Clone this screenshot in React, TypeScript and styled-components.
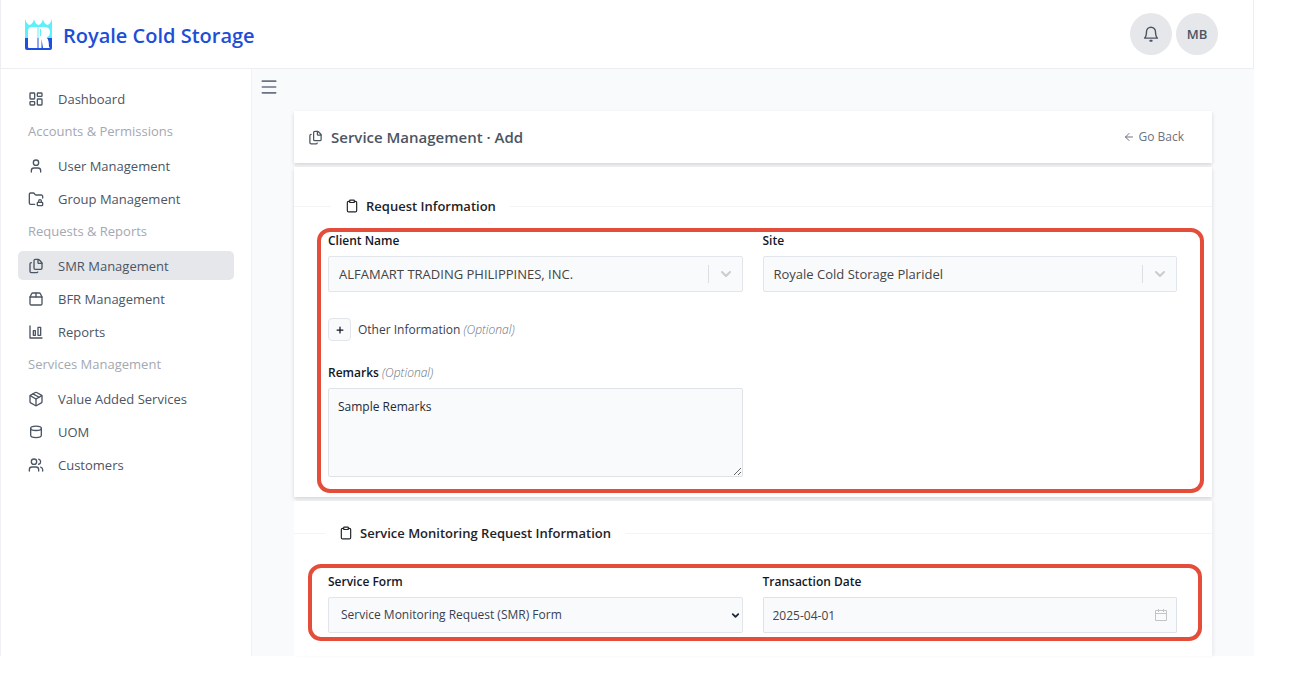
import React from "react";
import styled, { createGlobalStyle } from "styled-components";
import {
  ArrowLeft,
  ChevronDown,
  Clipboard,
  Files,
  FolderLock,
  LayoutDashboard,
  Menu,
  Package,
  Package2,
  Plus,
  User,
  Users,
} from "lucide-react";

const GlobalStyle = createGlobalStyle`
  *, *::before, *::after { box-sizing: border-box; }
  body {
    margin: 0;
    background: #fff;
    color: #374151;
    font-family: "Open Sans", "Noto Sans", sans-serif;
    font-size: 13px;
    line-height: 20px;
  }
  button, input, select, textarea { font: inherit; color: inherit; margin: 0; }
`;

const Page = styled.div`
  min-height: 100vh;
  padding: 0 39px 21px 0;
  display: flex;
  flex-direction: column;
`;

const Header = styled.header`
  display: flex;
  align-items: center;
  justify-content: space-between;
  height: 69px;
  padding: 0 35px 0 24px;
  border: solid #eceef1;
  border-width: 0 1px 1px 1px;
`;

const Brand = styled.a`
  display: flex;
  align-items: center;
  gap: 11px;
  color: #1d4ed8;
  font-size: 20px;
  font-weight: 600;
  line-height: 28px;
  text-decoration: none;
`;

const BrandName = styled.span`
  padding-top: 4px;
`;

const HeaderActions = styled.div`
  display: flex;
  gap: 4px;
`;

const RoundButton = styled.button`
  display: flex;
  align-items: center;
  justify-content: center;
  width: 42px;
  height: 42px;
  padding: 0;
  border: 0;
  border-radius: 50%;
  background: #e5e7eb;
  color: #4b5563;
  font-size: 13px;
  font-weight: 600;
`;

const Body = styled.div`
  flex: 1;
  display: flex;
`;

const Sidebar = styled.nav`
  flex: none;
  width: 252px;
  padding: 15px 17px;
  border: solid #f0f1f4;
  border-width: 0 1px;
`;

const NavGroup = styled.ul`
  display: flex;
  flex-direction: column;
  gap: 4px;
  margin: 0;
  padding: 0;
  list-style: none;
`;

const NavTitle = styled.h2`
  margin: 8px 0 10px 10px;
  color: #a3a8b2;
  font-size: 13px;
  font-weight: 400;
  line-height: 20px;
`;

const NavLink = styled.a<{ $active?: boolean }>`
  display: flex;
  align-items: center;
  gap: 14px;
  height: 29px;
  padding: 0 10px;
  border-radius: 5px;
  background: ${(p) => (p.$active ? "#e5e7eb" : "transparent")};
  color: #4b5563;
  font-size: 13px;
  text-decoration: none;
`;

const Main = styled.main`
  flex: 1;
  min-width: 0;
  display: flex;
  flex-direction: column;
  background: #f9fafb;
`;

const MenuButton = styled.button`
  align-self: flex-start;
  display: flex;
  margin: 8px 0 14px 7px;
  padding: 0;
  border: 0;
  background: none;
  color: #6b7280;
`;

const Cards = styled.div`
  flex: 1;
  display: flex;
  flex-direction: column;
  gap: 4px;
  padding: 0 42px;
`;

const Card = styled.section<{ $last?: boolean }>`
  position: relative;
  flex: ${(p) => (p.$last ? "1" : "none")};
  background: #fff;
  box-shadow: ${(p) =>
    p.$last ? "2px 0 3px rgba(0, 0, 0, 0.05)" : "0 2px 4px rgba(0, 0, 0, 0.15)"};
`;

const TitleCard = styled(Card)`
  display: flex;
  align-items: center;
  justify-content: space-between;
  height: 52px;
  padding: 0 28px 0 14px;
`;

const PageTitle = styled.h1`
  display: flex;
  align-items: center;
  gap: 8px;
  margin: 0;
  color: #4b5563;
  font-size: 15px;
  font-weight: 600;
  line-height: 24px;
`;

const BackLink = styled.a`
  display: flex;
  align-items: center;
  gap: 3px;
  color: #6b7280;
  font-size: 12px;
  text-decoration: none;
`;

const Divider = styled.h2<{ $lead: number }>`
  display: flex;
  align-items: center;
  gap: 14px;
  margin: 0;
  color: #1f2328;
  font-size: 13px;
  font-weight: 600;
  line-height: 22px;

  &::before,
  &::after {
    content: "";
    height: 1px;
    background: #f4f4f5;
  }
  &::before { width: ${(p) => p.$lead}px; }
  &::after { flex: 1; }
`;

const DividerText = styled.span`
  display: flex;
  align-items: center;
  gap: 7px;
`;

const RequestCard = styled(Card)`
  padding: 28px 0 20px;
`;

const MonitoringCard = styled(Card)`
  padding: 21px 0 16px;
`;

const FormGrid = styled.div<{ $top: number }>`
  display: grid;
  grid-template-columns: 1fr 1fr;
  column-gap: 20px;
  padding: ${(p) => p.$top}px 35px 0 34px;
`;

const Field = styled.div`
  display: flex;
  flex-direction: column;
  gap: 5px;
`;

const Label = styled.label`
  color: #111827;
  font-size: 12px;
  font-weight: 600;
  line-height: 20px;
`;

const Optional = styled.em`
  color: #6b7280;
  font-weight: 300;
`;

const ControlWrap = styled.div`
  position: relative;
  display: flex;
`;

const Select = styled.select<{ $plain?: boolean }>`
  appearance: none;
  width: 100%;
  height: 36px;
  padding: 0 48px 0 ${(p) => (p.$plain ? 12 : 10)}px;
  border: 1px solid #e2e6ea;
  border-radius: 2px;
  background: #f9fafb;
  color: ${(p) => (p.$plain ? "#374151" : "#444")};
  font-size: ${(p) => (p.$plain ? 12 : 13)}px;
`;

const Indicator = styled.span`
  position: absolute;
  top: 9px;
  right: 0;
  display: flex;
  align-items: center;
  justify-content: center;
  width: 35px;
  height: 18px;
  border-left: 1px solid #dcdfe3;
  color: #cccccc;
  pointer-events: none;
`;

const PlainArrow = styled.span`
  position: absolute;
  top: 13px;
  right: 2px;
  display: flex;
  color: #1f2937;
  pointer-events: none;
`;

const CalendarMark = styled.span`
  position: absolute;
  top: 12px;
  right: 10px;
  display: flex;
  color: #c4c4c4;
  pointer-events: none;
`;

const DateInput = styled.input`
  width: 100%;
  height: 36px;
  padding: 0 32px 0 9px;
  border: 1px solid #dfe2e7;
  border-radius: 1px;
  background: #f9fafb;
  color: #444;
  font-size: 12px;
`;

const OtherInfo = styled.div`
  grid-column: 1 / -1;
  display: flex;
  align-items: center;
  gap: 7px;
  margin: 26px 0 22px;
  color: #374151;
  font-size: 12px;
`;

const PlusButton = styled.button`
  display: flex;
  align-items: center;
  justify-content: center;
  width: 23px;
  height: 23px;
  padding: 0;
  border: 1px solid #e2e5e9;
  border-radius: 4px;
  background: #f9fafb;
  color: #111827;
`;

const TextArea = styled.textarea`
  width: 100%;
  height: 89px;
  padding: 8px 9px;
  border: 1px solid #dfe2e7;
  border-radius: 2px;
  background: #f9fafb;
  color: #1f2937;
  font-size: 12px;
  line-height: 20px;
`;

const Highlight = styled.div<{ $inset: string }>`
  position: absolute;
  inset: ${(p) => p.$inset};
  border: 4px solid #e44d3a;
  border-radius: 13px;
  pointer-events: none;
`;

const MonitoringHighlight = styled(Highlight)`
  height: 77px;
`;

const Logo = () => (
  <svg width="27" height="31" viewBox="0 0 27 31" aria-hidden="true">
    <path
      d="M0 0Q1.500 5 4.500 6Q8 5 9 0Q10 5 13.500 6Q17 5 18 0Q19 5 22.500 6Q25.500 5 27 0V19H0Z"
      fill="#5cf0fb"
    />
    <path d="M0 19H27V29Q27 31 25 31H2Q0 31 0 29Z" fill="#1d4fe0" />
    <path d="M3 12Q3 8 7 8H12.500V29H4Q3 29 3 28Z" fill="#fff" />
    <path
      d="M13.500 8H19Q25 8 25 13Q25 17 21.500 18.500Q24 20 24 28L25 29H18L16.500 20V29H13.500Z"
      fill="#fff"
    />
    <path d="M15 10H16V17H15Z" fill="#5cf0fb" />
  </svg>
);

const BellIcon = () => (
  <svg
    width="18"
    height="18"
    viewBox="0 0 24 24"
    fill="none"
    stroke="currentColor"
    strokeWidth="1.900"
    strokeLinejoin="round"
    strokeLinecap="round"
    aria-hidden="true"
  >
    <path d="M3.500 17.500H20.500Q18.200 15.500 18 9A6 6 0 0 0 6 9Q5.800 15.500 3.500 17.500Z" />
    <path d="M11 21H13" strokeWidth="2.400" />
  </svg>
);

const CalendarIcon = () => (
  <svg width="12" height="12" viewBox="0 0 12 12" fill="none" stroke="currentColor" aria-hidden="true">
    <path d="M0.500 1.500H11.500V11.500H0.500ZM0.500 4.500H11.500M3.500 0V3M8.500 0V3" />
  </svg>
);

type GlyphProps = { size?: number; strokeWidth?: number };

const BarsIcon = ({ size = 16, strokeWidth = 2 }: GlyphProps) => (
  <svg width={size} height={size} viewBox="0 0 24 24" fill="none" stroke="currentColor" strokeWidth={strokeWidth} strokeLinecap="round" strokeLinejoin="round" aria-hidden="true">
    <path d="M3 3V21H21" />
    <rect x="8" y="10" width="3" height="7" />
    <rect x="15" y="5" width="4" height="12" />
  </svg>
);

const DrumIcon = ({ size = 16, strokeWidth = 2 }: GlyphProps) => (
  <svg width={size} height={size} viewBox="0 0 24 24" fill="none" stroke="currentColor" strokeWidth={strokeWidth} aria-hidden="true">
    <ellipse cx="12" cy="6.500" rx="8" ry="3.300" />
    <path d="M4 6.500V17C4 19 7.500 20.500 12 20.500S20 19 20 17V6.500" />
  </svg>
);

const icon = { size: 16, strokeWidth: 2, "aria-hidden": true } as const;

const topLinks = [{ label: "Dashboard", Icon: LayoutDashboard }];

const groups = [
  {
    title: "Accounts & Permissions",
    links: [
      { label: "User Management", Icon: User },
      { label: "Group Management", Icon: FolderLock },
    ],
  },
  {
    title: "Requests & Reports",
    links: [
      { label: "SMR Management", Icon: Files, active: true },
      { label: "BFR Management", Icon: Package2 },
      { label: "Reports", Icon: BarsIcon },
    ],
  },
  {
    title: "Services Management",
    links: [
      { label: "Value Added Services", Icon: Package },
      { label: "UOM", Icon: DrumIcon },
      { label: "Customers", Icon: Users },
    ],
  },
];

type LinkItem = { label: string; Icon: React.ElementType; active?: boolean };

const NavList = ({ links }: { links: LinkItem[] }) => (
  <NavGroup>
    {links.map(({ label, Icon, active }) => (
      <li key={label}>
        <NavLink href="#" $active={active} aria-current={active ? "page" : undefined}>
          <Icon {...icon} />
          {label}
        </NavLink>
      </li>
    ))}
  </NavGroup>
);

const SearchSelect = ({ id, value }: { id: string; value: string }) => (
  <ControlWrap>
    <Select id={id} defaultValue={value}>
      <option>{value}</option>
    </Select>
    <Indicator>
      <ChevronDown size={16} strokeWidth={3} />
    </Indicator>
  </ControlWrap>
);

export default function App() {
  return (
    <Page>
      <GlobalStyle />
      <Header>
        <Brand href="#">
          <Logo />
          <BrandName>Royale Cold Storage</BrandName>
        </Brand>
        <HeaderActions>
          <RoundButton type="button" aria-label="Notifications">
            <BellIcon />
          </RoundButton>
          <RoundButton type="button">MB</RoundButton>
        </HeaderActions>
      </Header>
      <Body>
        <Sidebar>
          <NavList links={topLinks} />
          {groups.map((group) => (
            <React.Fragment key={group.title}>
              <NavTitle>{group.title}</NavTitle>
              <NavList links={group.links} />
            </React.Fragment>
          ))}
        </Sidebar>
        <Main>
          <MenuButton type="button" aria-label="Toggle menu">
            <Menu size={20} strokeWidth={2} />
          </MenuButton>
          <Cards>
            <TitleCard as="header">
              <PageTitle>
                <Files size={15} strokeWidth={2} />
                Service Management · Add
              </PageTitle>
              <BackLink href="#">
                <ArrowLeft size={12} strokeWidth={2} />
                Go Back
              </BackLink>
            </TitleCard>

            <RequestCard>
              <Divider $lead={37}>
                <DividerText>
                  <Clipboard size={14} strokeWidth={2} />
                  Request Information
                </DividerText>
              </Divider>
              <FormGrid $top={14}>
                <Field>
                  <Label htmlFor="client">Client Name</Label>
                  <SearchSelect id="client" value="ALFAMART TRADING PHILIPPINES, INC." />
                </Field>
                <Field>
                  <Label htmlFor="site">Site</Label>
                  <SearchSelect id="site" value="Royale Cold Storage Plaridel" />
                </Field>
                <OtherInfo>
                  <PlusButton type="button" aria-label="Show other information">
                    <Plus size={10} strokeWidth={3} />
                  </PlusButton>
                  <span>
                    Other Information <Optional>(Optional)</Optional>
                  </span>
                </OtherInfo>
                <Field>
                  <Label htmlFor="remarks">
                    Remarks <Optional>(Optional)</Optional>
                  </Label>
                  <TextArea id="remarks" defaultValue="Sample Remarks" />
                </Field>
              </FormGrid>
              <Highlight $inset="61px 8px 4px 23px" />
            </RequestCard>

            <MonitoringCard $last>
              <Divider $lead={31}>
                <DividerText>
                  <Clipboard size={14} strokeWidth={2} />
                  Service Monitoring Request Information
                </DividerText>
              </Divider>
              <FormGrid $top={28}>
                <Field>
                  <Label htmlFor="form">Service Form</Label>
                  <ControlWrap>
                    <Select id="form" $plain defaultValue="smr">
                      <option value="smr">Service Monitoring Request (SMR) Form</option>
                    </Select>
                    <PlainArrow>
                      <ChevronDown size={11} strokeWidth={4} />
                    </PlainArrow>
                  </ControlWrap>
                </Field>
                <Field>
                  <Label htmlFor="date">Transaction Date</Label>
                  <ControlWrap>
                    <DateInput id="date" type="text" defaultValue="2025-04-01" />
                    <CalendarMark>
                      <CalendarIcon />
                    </CalendarMark>
                  </ControlWrap>
                </Field>
              </FormGrid>
              <MonitoringHighlight $inset="63px 10px auto 14px" />
            </MonitoringCard>
          </Cards>
        </Main>
      </Body>
    </Page>
  );
}
